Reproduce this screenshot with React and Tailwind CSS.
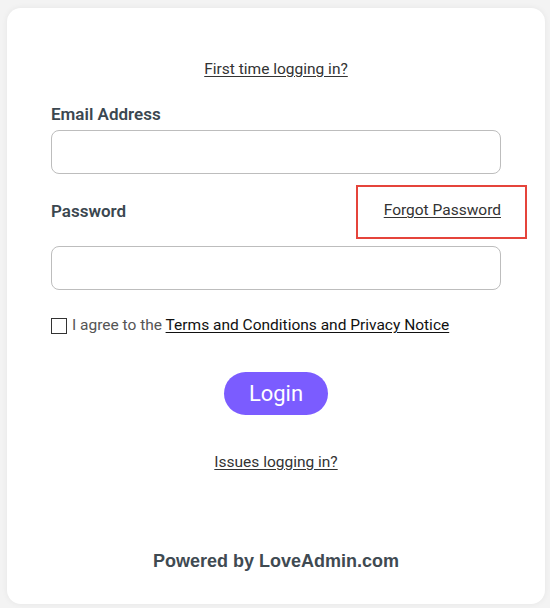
export default function App() {
  return (
    <div className="min-h-[608px] w-[550px] bg-[#f3f3f3] pt-2 pl-[7px]" style={{ fontFamily: "Roboto, 'Liberation Sans', sans-serif" }}>
      <div className="relative flex h-[596px] w-[538px] flex-col rounded-[14px] bg-white px-[44px] shadow-[0_0_6px_rgba(0,0,0,0.06)]">
        <div className="mt-[49px] text-center leading-6">
          <a href="#" className="text-[15.5px] text-[#333] underline underline-offset-2">
            First time logging in?
          </a>
        </div>

        <label className="mt-[22px] text-[17px] font-semibold leading-[22px] text-[#3b4750]">Email Address</label>
        <input className="mt-[5px] h-[44px] w-full rounded-lg border border-[#bdbdbd] px-3 outline-none" />

        <div className="mt-[25px] flex h-6 items-center justify-between">
          <label className="text-[17px] font-semibold leading-[22px] text-[#3b4750]">Password</label>
          <a href="#" className="text-[15.5px] text-[#333] underline underline-offset-2">
            Forgot Password
          </a>
        </div>
        <input type="password" className="mt-[23px] h-[44px] w-full rounded-lg border border-[#bdbdbd] px-3 outline-none" />

        <label className="mt-[24px] flex h-6 items-center gap-[5px] text-[15.5px] text-[#555]">
          <span className="h-4 w-4 shrink-0 border border-[#333] bg-white" />
          <span>
            I agree to the{" "}
            <a href="#" className="text-[#111] underline underline-offset-2">
              Terms and Conditions and Privacy Notice
            </a>
          </span>
        </label>

        <div className="mt-[34px] flex justify-center">
          <button className="h-[43px] w-[104px] rounded-full bg-[#7b5cff] text-[22px] text-white">Login</button>
        </div>

        <div className="mt-[35px] text-center leading-6">
          <a href="#" className="text-[15.5px] text-[#333] underline underline-offset-2">
            Issues logging in?
          </a>
        </div>

        <div className="mt-auto mb-[29px] text-center text-[18px] font-bold text-[#3f4a52]" style={{ fontFamily: "'Liberation Sans', Arial, sans-serif" }}>
          Powered by LoveAdmin.com
        </div>

        <div className="absolute left-[349px] top-[177px] h-[54px] w-[171px] border-2 border-[#e5443b]" />
      </div>
    </div>
  );
}
